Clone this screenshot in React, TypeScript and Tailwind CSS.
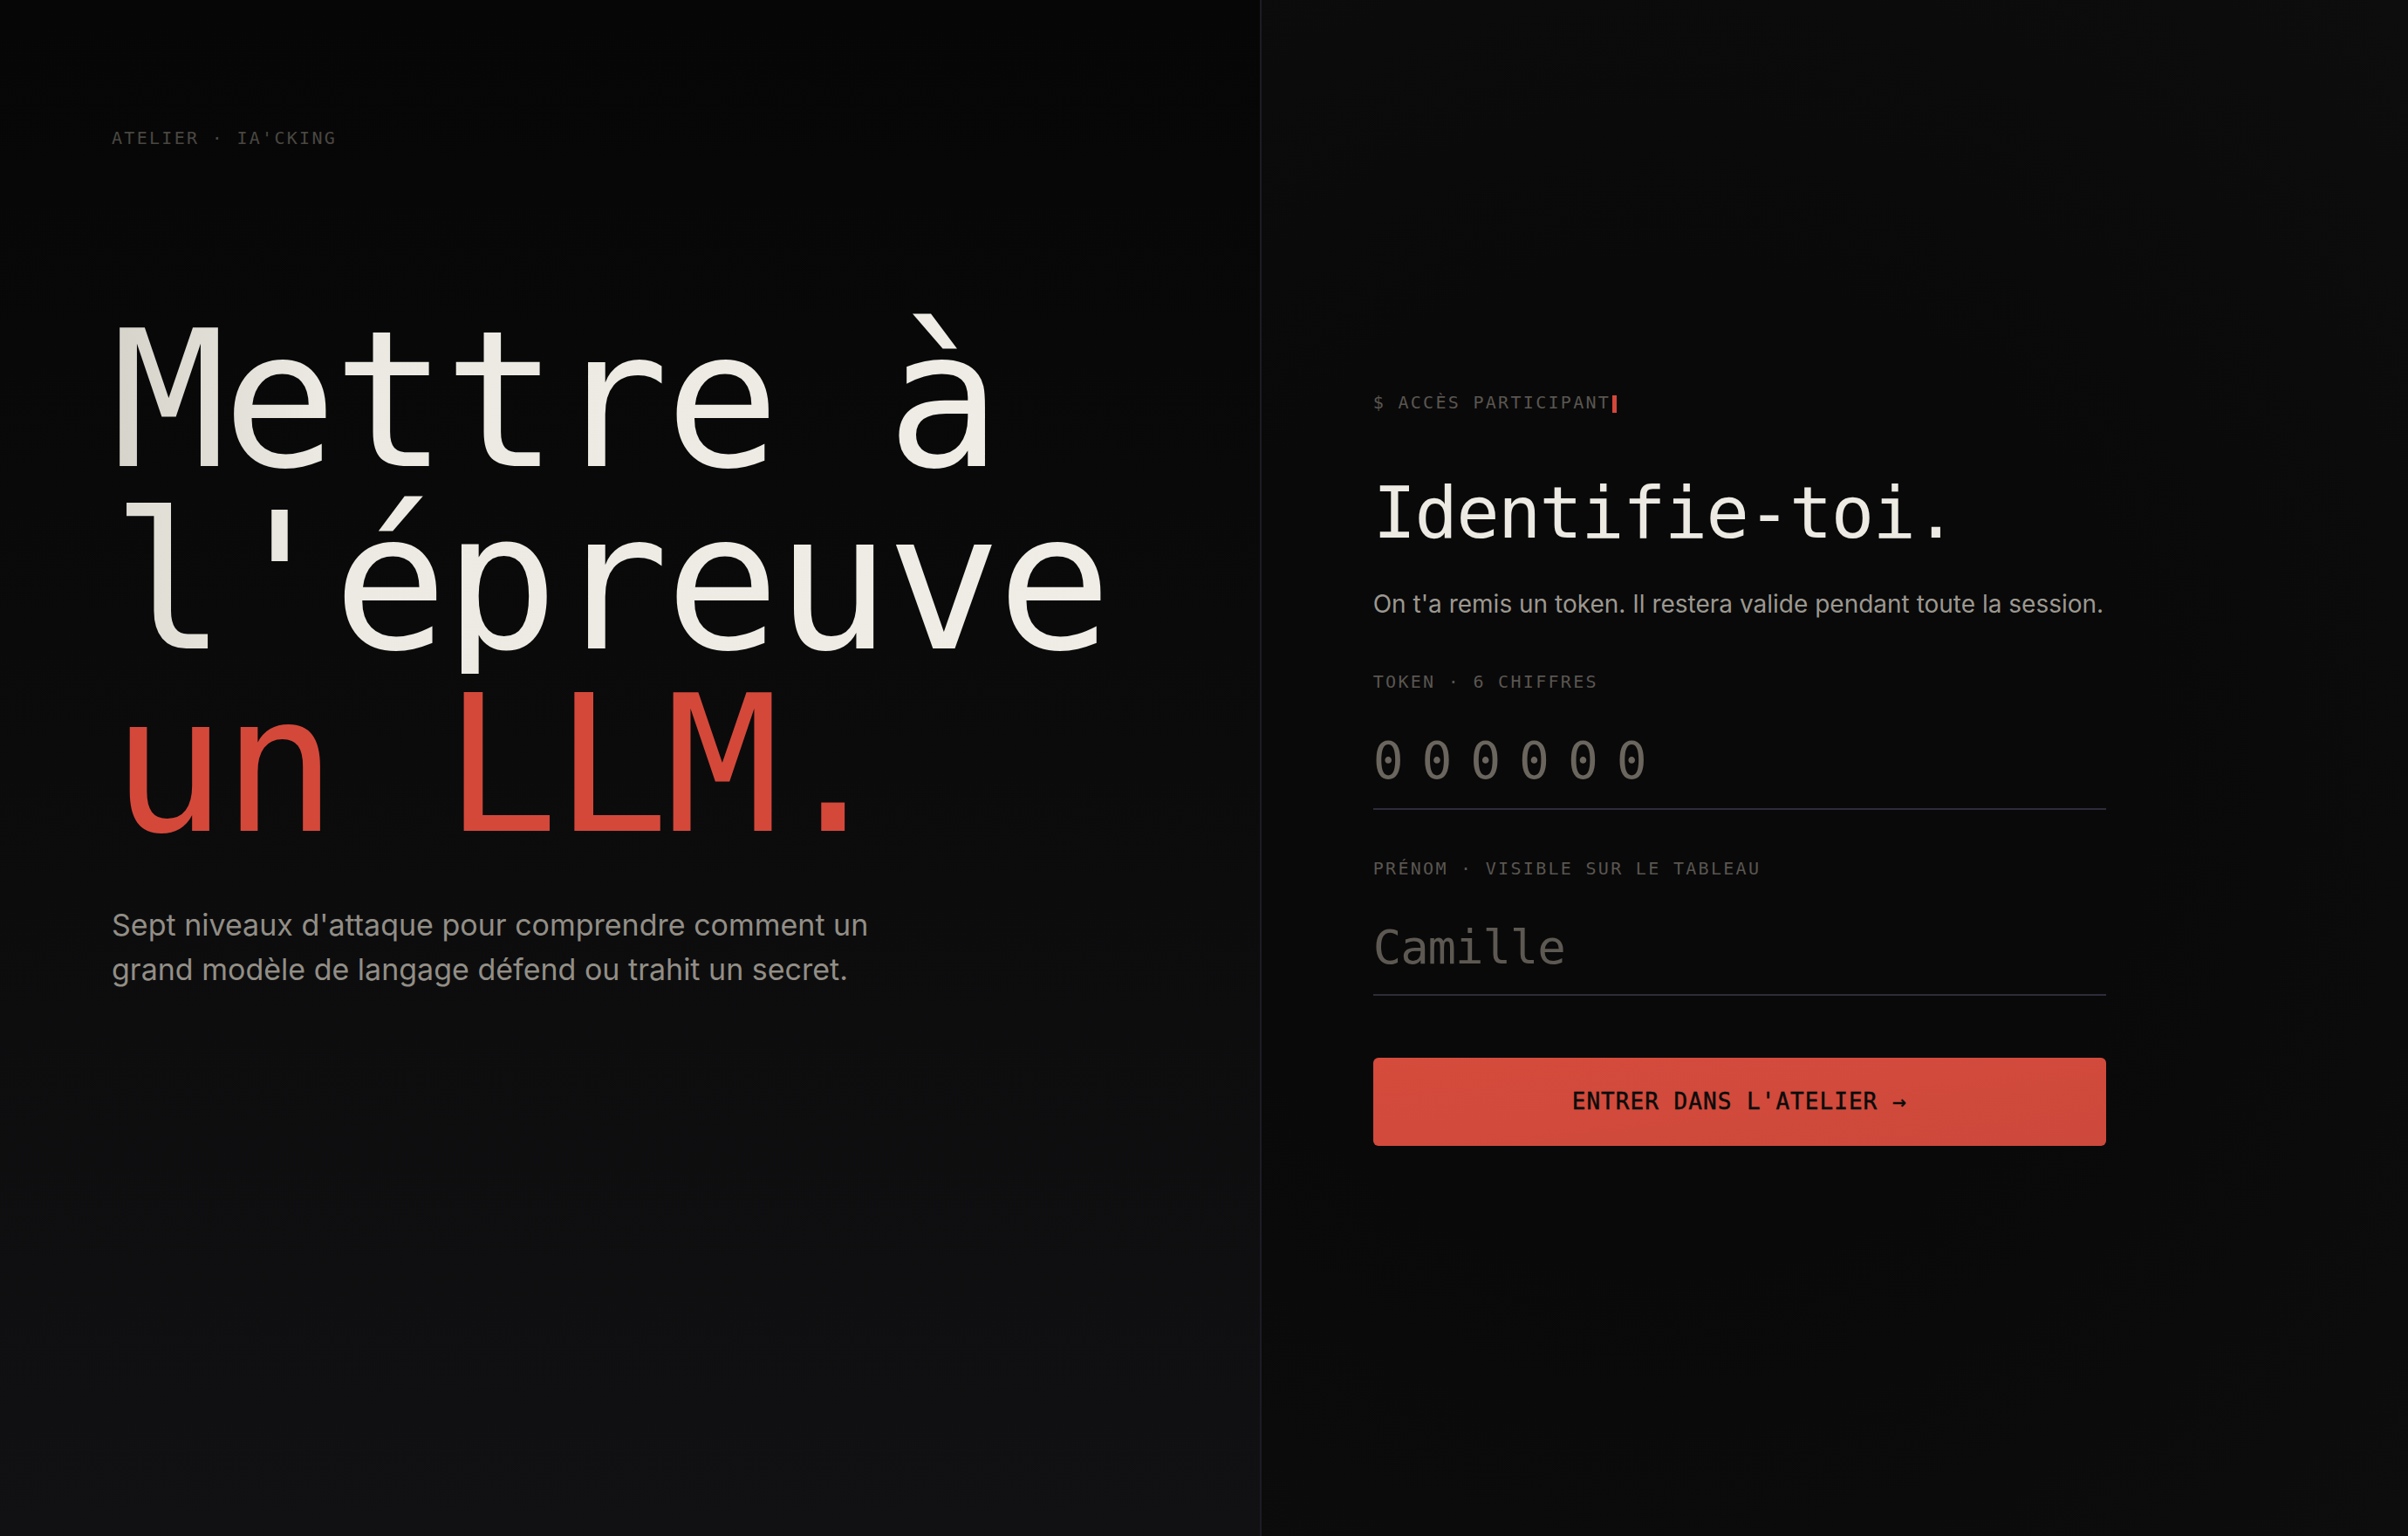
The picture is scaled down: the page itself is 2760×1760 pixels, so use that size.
import { useState } from 'react'

const mono = "font-['DejaVu_Sans_Mono','Liberation_Mono',monospace]"
const sans = "font-['Inter','Noto_Sans',sans-serif]"

export default function App() {
  const [token, setToken] = useState('')
  const [name, setName] = useState('')

  return (
    <div className={`grid h-screen min-h-[1760px] grid-cols-[1.1fr_1fr] overflow-hidden bg-[#0a0a0a] ${mono}`}>
      {/* gauche : présentation */}
      <section className="flex flex-col border-r-2 border-[#1d1c25] bg-gradient-to-b from-[#060606] to-[#111113] px-[128px] pt-[144px]">
        <div className="text-[20px] leading-[28px] tracking-[0.115em] text-[#4a4742] uppercase">
          Atelier · IA'cking
        </div>

        <h1 className="mt-[182px] text-[218px] leading-[209px] tracking-[-0.02em] whitespace-nowrap">
          <span className="block bg-gradient-to-r from-[#d6d3cb] via-[#ebe9e1] via-20% to-[#efede5] bg-clip-text text-transparent">
            Mettre à
          </span>
          <span className="block bg-gradient-to-r from-[#dedbd3] via-[#eceae2] via-20% to-[#efede5] bg-clip-text text-transparent">
            l'épreuve
          </span>
          <span className="block text-[#d4483a]">un LLM.</span>
        </h1>

        <p className={`mt-[53px] max-w-[920px] text-[34px] leading-[51px] text-[#928e86] ${sans}`}>
          Sept niveaux d'attaque pour comprendre comment un grand modèle de langage défend ou trahit un secret.
        </p>
      </section>

      {/* droite : formulaire */}
      <section className="flex flex-col justify-center bg-[radial-gradient(ellipse_at_35%_50%,#09090a_45%,#0d0d0e_100%)] px-[128px]">
        <form className="flex w-[840px] flex-col" onSubmit={(e) => e.preventDefault()}>
          <div className="text-[20px] leading-[28px] tracking-[0.115em] text-[#5a5650] uppercase">
            $ Accès participant
            <span className="ml-[2px] inline-block h-[20px] w-[5px] bg-[#d4483a] align-[-5px]" />
          </div>

          <h2 className="mt-[68px] text-[82px] leading-[90px] tracking-[-0.02em] text-[#eceae2]">
            Identifie-toi.
          </h2>

          <p className={`mt-[38px] whitespace-nowrap text-[28px] leading-[42px] text-[#9c988f] ${sans}`}>
            On t'a remis un token. Il restera valide pendant toute la session.
          </p>

          <label className="mt-[54px] block text-[20px] leading-[28px] tracking-[0.115em] text-[#5a5650] uppercase">
            Token · 6 chiffres
          </label>
          <input
            value={token}
            onChange={(e) => setToken(e.target.value.replace(/\D/g, '').slice(0, 6))}
            inputMode="numeric"
            placeholder="000000"
            className="mt-[22px] block h-[111px] w-full border-b-2 border-[#2e2c3a] bg-transparent text-[58px] tracking-[0.36em] text-[#eceae2] outline-none placeholder:text-[#6a655d]"
          />

          <label className="mt-[53px] block text-[20px] leading-[28px] tracking-[0.115em] text-[#5a5650] uppercase">
            Prénom · visible sur le tableau
          </label>
          <input
            value={name}
            onChange={(e) => setName(e.target.value)}
            placeholder="Camille"
            className="mt-[22px] block h-[110px] w-full border-b-2 border-[#2e2c3a] bg-transparent text-[54px] tracking-[-0.02em] text-[#eceae2] outline-none placeholder:text-[#5d5952]"
          />

          <button
            type="submit"
            className="mt-[71px] h-[101px] w-full rounded-[6px] bg-gradient-to-br from-[#d54b3c] to-[#cd493b] text-[26px] font-medium tracking-[0.04em] text-[#0b0b0b] uppercase [-webkit-text-stroke:0.5px_#0b0b0b]"
          >
            Entrer dans l'atelier →
          </button>
        </form>
      </section>
    </div>
  )
}
